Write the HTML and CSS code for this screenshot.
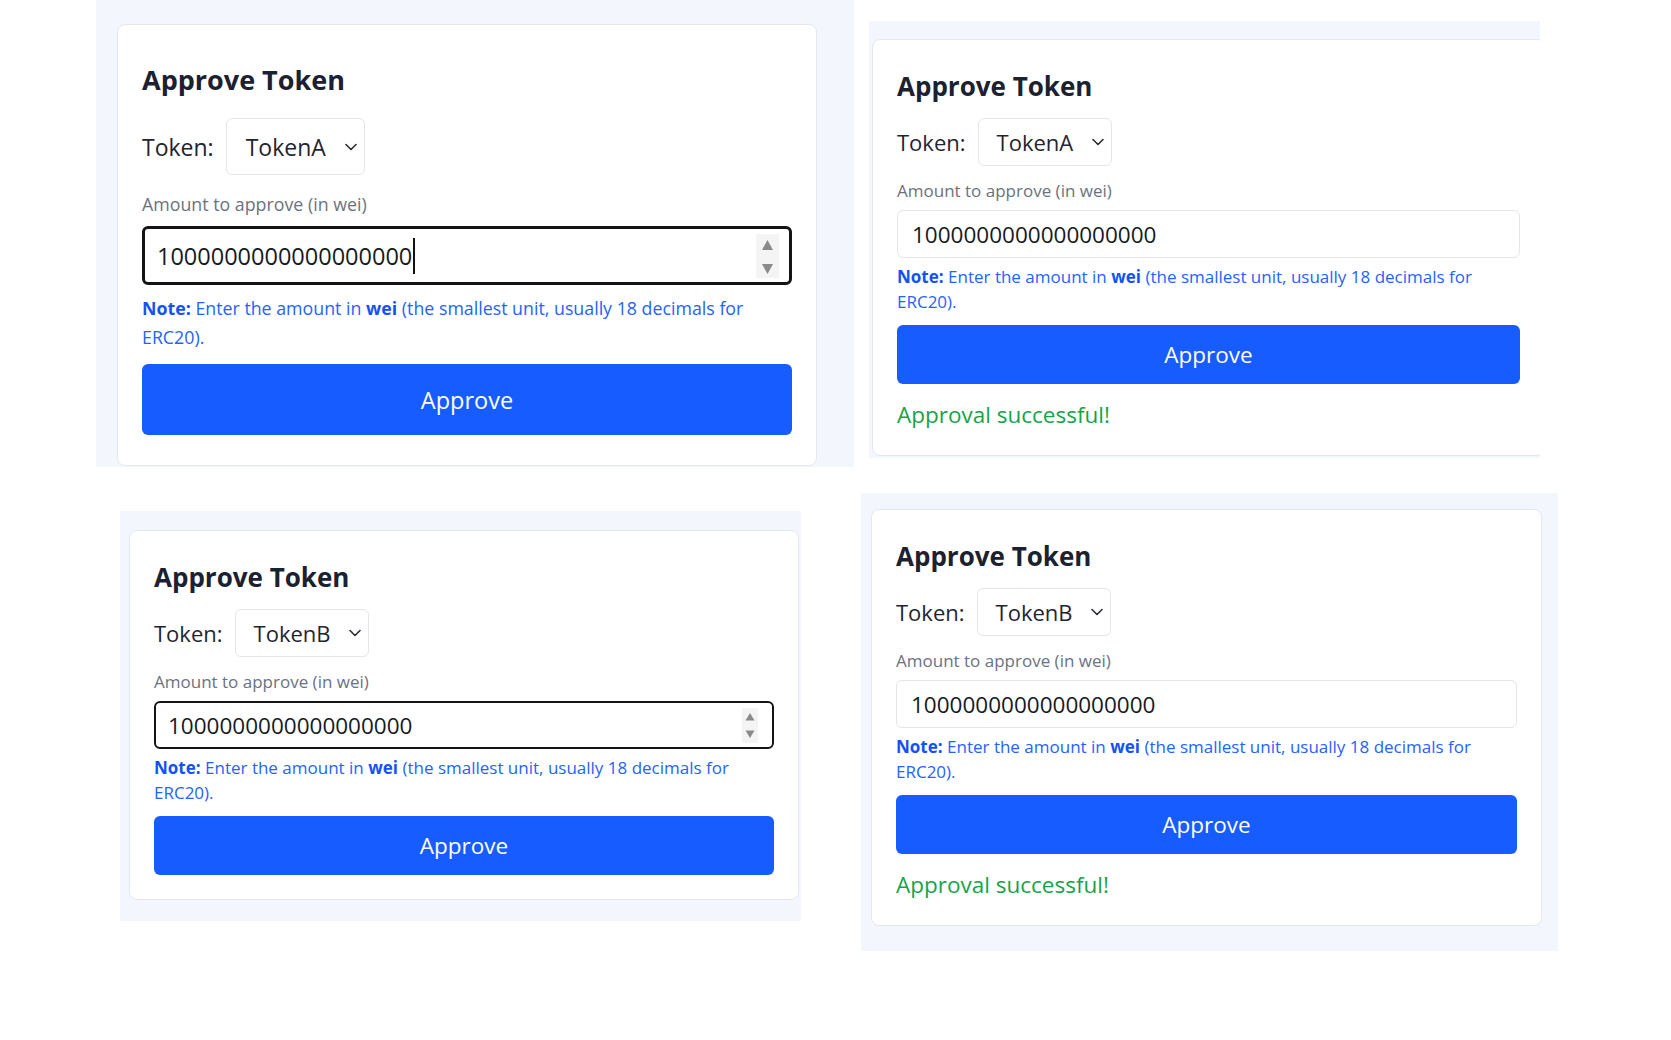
FILE: index.html
```html
<!DOCTYPE html>
<html lang="en">
<head>
<meta charset="utf-8">
<title>Approve Token</title>
<link rel="stylesheet" href="styles.css">
</head>
<body>
<div class="row row--top">
  <section class="panel panel--a">
    <div class="card card--lg">
      <h2 class="title">Approve Token</h2>
      <div class="token-row">
        <span class="token-label">Token:</span>
        <div class="select"><span>TokenA</span><svg class="chev" width="12" height="8" viewBox="0 0 12 8"><path d="M1 1.5 6 6.5 11 1.5" fill="none" stroke="#2a2d33" stroke-width="1.6" stroke-linecap="round" stroke-linejoin="round"/></svg></div>
      </div>
      <div class="amount-label">Amount to approve (in wei)</div>
      <div class="field field--focus">
        <span class="value">1000000000000000000</span><span class="caret"></span>
        <span class="spin"><svg width="23" height="44" viewBox="0 0 23 44"><rect width="23" height="44" fill="#f4f4f4"/><path d="M11.5 6 17 16H6Z" fill="#8a8a8a"/><path d="M11.5 40 17 30H6Z" fill="#8a8a8a"/></svg></span>
      </div>
      <p class="note"><b>Note:</b> Enter the amount in <b>wei</b> (the smallest unit, usually 18 decimals for ERC20).</p>
      <button class="btn" type="button">Approve</button>
    </div>
  </section>
  <section class="panel panel--b">
    <div class="card card--wide">
      <h2 class="title">Approve Token</h2>
      <div class="token-row">
        <span class="token-label">Token:</span>
        <div class="select"><span>TokenA</span><svg class="chev" width="12" height="8" viewBox="0 0 12 8"><path d="M1 1.5 6 6.5 11 1.5" fill="none" stroke="#2a2d33" stroke-width="1.6" stroke-linecap="round" stroke-linejoin="round"/></svg></div>
      </div>
      <div class="amount-label">Amount to approve (in wei)</div>
      <div class="field"><span class="value">1000000000000000000</span></div>
      <p class="note"><b>Note:</b> Enter the amount in <b>wei</b> (the smallest unit, usually 18 decimals for ERC20).</p>
      <button class="btn" type="button">Approve</button>
      <div class="success">Approval successful!</div>
    </div>
  </section>
</div>
<div class="row row--bottom">
  <section class="panel panel--c">
    <div class="card">
      <h2 class="title">Approve Token</h2>
      <div class="token-row">
        <span class="token-label">Token:</span>
        <div class="select"><span>TokenB</span><svg class="chev" width="12" height="8" viewBox="0 0 12 8"><path d="M1 1.5 6 6.5 11 1.5" fill="none" stroke="#2a2d33" stroke-width="1.6" stroke-linecap="round" stroke-linejoin="round"/></svg></div>
      </div>
      <div class="amount-label">Amount to approve (in wei)</div>
      <div class="field field--active">
        <span class="value">1000000000000000000</span>
        <span class="spin"><svg width="16" height="35" viewBox="0 0 16 35"><rect width="16" height="35" fill="#f4f4f4"/><path d="M8 5 12.5 12.5H3.5Z" fill="#8a8a8a"/><path d="M8 30 12.5 22.5H3.5Z" fill="#8a8a8a"/></svg></span>
      </div>
      <p class="note"><b>Note:</b> Enter the amount in <b>wei</b> (the smallest unit, usually 18 decimals for ERC20).</p>
      <button class="btn" type="button">Approve</button>
    </div>
  </section>
  <section class="panel panel--d">
    <div class="card card--d">
      <h2 class="title">Approve Token</h2>
      <div class="token-row">
        <span class="token-label">Token:</span>
        <div class="select"><span>TokenB</span><svg class="chev" width="12" height="8" viewBox="0 0 12 8"><path d="M1 1.5 6 6.5 11 1.5" fill="none" stroke="#2a2d33" stroke-width="1.6" stroke-linecap="round" stroke-linejoin="round"/></svg></div>
      </div>
      <div class="amount-label">Amount to approve (in wei)</div>
      <div class="field"><span class="value">1000000000000000000</span></div>
      <p class="note"><b>Note:</b> Enter the amount in <b>wei</b> (the smallest unit, usually 18 decimals for ERC20).</p>
      <button class="btn" type="button">Approve</button>
      <div class="success">Approval successful!</div>
    </div>
  </section>
</div>
</body>
</html>
```
FILE: styles.css
```css
html, body {
  margin: 0;
  padding: 0;
  background: #ffffff;
}

body {
  font-family: "Open Sans", "Noto Sans", "DejaVu Sans", sans-serif;
  color: #1f2430;
}

.row {
  display: flex;
  align-items: flex-start;
}

.row--top {
  height: 467px;
}

.panel {
  box-sizing: border-box;
  flex-shrink: 0;
  background: #f3f7fd;
}

.panel--a {
  width: 758px;
  margin-left: 96px;
  padding: 24px 37px 1px 21px;
}

.panel--b {
  width: 671px;
  margin-left: 15px;
  margin-top: 21px;
  padding: 18px 0 2px 3px;
  overflow: hidden;
}

.panel--c {
  width: 681px;
  margin-left: 120px;
  margin-top: 44px;
  padding: 19px 0 21px 9px;
}

.panel--d {
  width: 697px;
  margin-left: 60px;
  margin-top: 26px;
  padding: 16px 0 25px 10px;
}

.card {
  box-sizing: border-box;
  width: 670px;
  background: #ffffff;
  border: 1px solid #e4e7ec;
  border-radius: 8px;
  padding: 28px 24px 24px;
  display: flex;
  flex-direction: column;
}

.card--wide {
  width: 673px;
}

.card--d {
  width: 671px;
}

.title {
  margin: 0;
  font-size: 26px;
  font-weight: 700;
  line-height: 36px;
  color: #1c2130;
}

.token-row {
  display: flex;
  align-items: center;
  gap: 12px;
  margin-top: 14px;
}

.token-label {
  font-size: 22px;
  color: #1f2430;
}

.select {
  box-sizing: border-box;
  width: 134px;
  height: 48px;
  border: 1px solid #e3e6ea;
  border-radius: 6px;
  display: flex;
  align-items: center;
  justify-content: space-between;
  padding: 0 7px 0 18px;
  font-size: 22px;
  color: #1f2430;
}

.chev {
  display: block;
}

.amount-label {
  margin-top: 13px;
  font-size: 17px;
  line-height: 24px;
  color: #6b7280;
}

.field {
  box-sizing: border-box;
  margin-top: 7px;
  height: 48px;
  border: 1px solid #e3e6ea;
  border-radius: 6px;
  display: flex;
  align-items: center;
  padding: 0 14px;
  font-size: 22.5px;
  color: #161a22;
}

.field--active {
  border: 2px solid #141414;
  padding: 0 14px 0 12px;
}

.spin {
  margin-left: auto;
  display: flex;
}

.note {
  margin: 6px 0 0;
  font-size: 17px;
  line-height: 25px;
  color: #2563ff;
}

.note b {
  font-weight: 700;
  color: #1452f5;
}

.btn {
  margin-top: 11px;
  height: 59px;
  border: 0;
  border-radius: 6px;
  background: #175cff;
  color: #ffffff;
  font-family: inherit;
  font-size: 22.5px;
  cursor: pointer;
}

.success {
  margin-top: 15px;
  font-size: 22.5px;
  line-height: 32px;
  color: #16a34a;
}

/* larger capture (top-left) */
.card--lg {
  width: 700px;
  padding: 36px 24px 30px;
}

.card--lg .title {
  font-size: 27px;
  margin-top: 1px;
  margin-bottom: -1px;
}

.card--lg .token-row {
  margin-top: 21px;
}

.card--lg .token-label,
.card--lg .select {
  font-size: 23px;
}

.card--lg .select {
  width: 139px;
  height: 57px;
  padding-left: 19px;
}

.card--lg .amount-label {
  margin-top: 16px;
  font-size: 17.8px;
  line-height: 26px;
}

.card--lg .field {
  margin-top: 9px;
  height: 59px;
  font-size: 23.5px;
}

.field--focus {
  border: 3px solid #141414;
  padding: 0 10px 0 12px;
}

.caret {
  width: 2px;
  height: 36px;
  background: #111;
  margin-left: 1px;
}

.card--lg .note {
  margin-top: 9px;
  font-size: 17.8px;
  line-height: 29px;
}

.card--lg .btn {
  margin-top: 12px;
  height: 71px;
  font-size: 23.5px;
}
```
